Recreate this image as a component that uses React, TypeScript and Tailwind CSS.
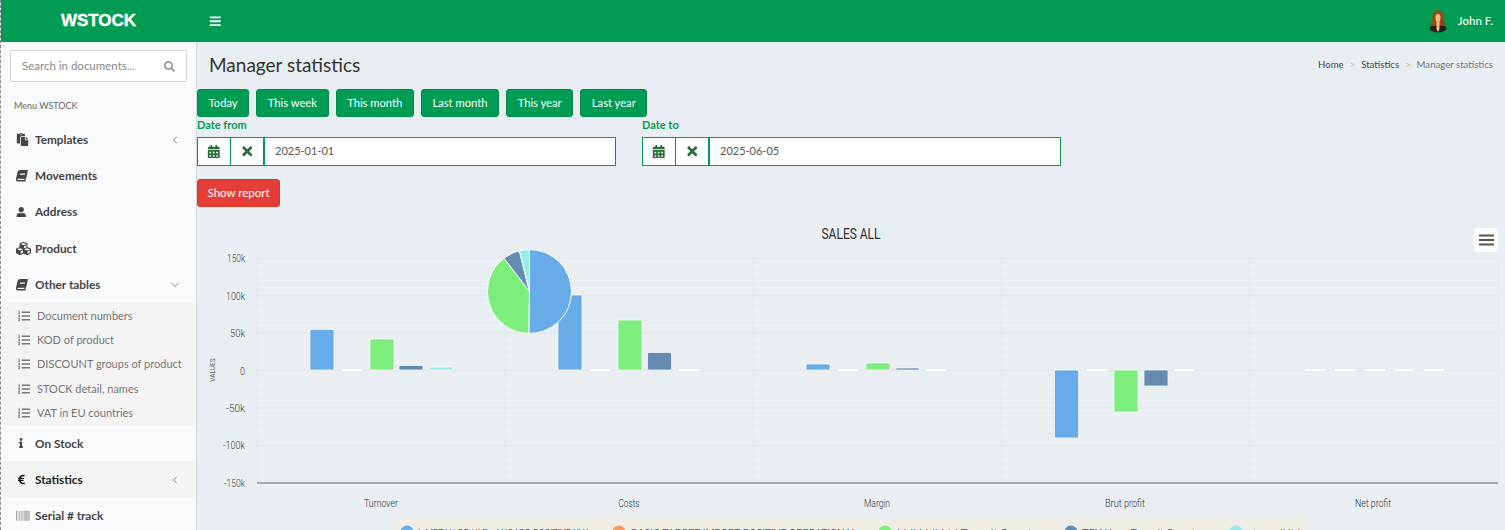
import type { ReactNode } from "react"
import {
  FaBars,
  FaBarcode,
  FaBook,
  FaCalendarAlt,
  FaCubes,
  FaEuroSign,
  FaInfo,
  FaListOl,
  FaPaste,
  FaSearch,
  FaTimes,
  FaUser,
} from "react-icons/fa"
import { ChevronDown, ChevronLeft } from "lucide-react"

const BLUE = "#67acE8"
const ORANGE = "#fb9a5f"
const GREEN = "#7bee7b"
const NAVY = "#678ab3"
const CYAN = "#98ecea"

const rangeButtons = ["Today", "This week", "This month", "Last month", "This year", "Last year"]
const subItems = [
  "Document numbers",
  "KOD of product",
  "DISCOUNT groups of product",
  "STOCK detail, names",
  "VAT in EU countries",
]

// bars are [x, value y, colour]; the zero line is at y 370
const bars: [number, number, string][] = [
  [310, 329.5, BLUE],
  [370, 339, GREEN],
  [399, 365.5, NAVY],
  [429, 367, CYAN],
  [558, 295, BLUE],
  [618, 320, GREEN],
  [647.5, 352.5, NAVY],
  [806, 364, BLUE],
  [866, 363, GREEN],
  [895.5, 368, NAVY],
  [1054.5, 438, BLUE],
  [1114, 412, GREEN],
  [1144, 386, NAVY],
]
const zeroDashes = [342, 590, 679, 838, 926, 1087, 1174, 1305, 1335, 1365, 1394, 1424]
const yLabels: [string, number, number][] = [
  ["150k", 262, 18],
  ["100k", 300, 19],
  ["50k", 337, 15],
  ["0", 375, 5],
  ["-50k", 412, 19],
  ["-100k", 449, 22],
  ["-150k", 487, 21],
]
const xLabels: [string, number, number][] = [
  ["Turnover", 381, 34],
  ["Costs", 629, 21],
  ["Margin", 877, 26],
  ["Brut profit", 1125, 40],
  ["Net profit", 1373, 36],
]
const legend: [string, number, string, number, number][] = [
  ["L-METAN GB HLB - ANGARO POSITIVE UVA", 407, BLUE, 418, 172],
  ["BASIC TARGET IMPORT POSITIVE OPERATIONAL", 619, ORANGE, 631, 226],
  ["Lidl Lidl Ltd Transit Count", 885, GREEN, 897, 135],
  ["TRX Hour Transit Count", 1071, NAVY, 1082, 113],
  ["store all ltd", 1236, CYAN, 1247, 53],
]
const pie: [number, number, string][] = [
  [0, 181, BLUE],
  [181, 322.5, GREEN],
  [322.5, 346, NAVY],
  [346, 360, CYAN],
]

function slicePath(from: number, to: number) {
  const cx = 529.5
  const cy = 291.5
  const r = 42
  const point = (deg: number) => {
    const a = (deg * Math.PI) / 180
    return `${cx + r * Math.sin(a)} ${cy - r * Math.cos(a)}`
  }
  return `M${cx} ${cy}L${point(from)}A${r} ${r} 0 ${to - from > 180 ? 1 : 0} 1 ${point(to)}Z`
}

function MenuItem({ icon, label, arrow, active }: { icon: ReactNode; label: string; arrow?: ReactNode; active?: boolean }) {
  return (
    <div className={`flex h-[36.250px] items-center pr-[15px] pl-[15px] text-[11.800px] font-bold ${active ? "bg-[#f4f4f5] text-[#222]" : "text-[#444]"}`}>
      <span className="flex w-[19px] shrink-0 items-center">{icon}</span>
      <span className="flex-1">{label}</span>
      {arrow}
    </div>
  )
}

function DateField({ label, value }: { label: string; value: string }) {
  return (
    <div className="w-[419px]">
      <div className="text-[11px] leading-[14px] font-bold text-[#009c53]">{label}</div>
      <div className="mt-[5px] flex h-[29px] border border-[#009c53] bg-white text-[#2d6a39]">
        <span className="flex w-[33px] items-center justify-center border-r border-[#009c53] text-[13.500px]">
          <FaCalendarAlt />
        </span>
        <span className="flex w-[34px] items-center justify-center border-r-2 border-[#009c53] text-[14.500px]">
          <FaTimes />
        </span>
        <span className="flex flex-1 items-center pl-[10px] text-[11px] text-[#555]">{value}</span>
      </div>
    </div>
  )
}

function Avatar() {
  return (
    <svg width="20" height="24" viewBox="0 0 20 24" className="shrink-0">
      <ellipse cx="10" cy="19.500" rx="8.500" ry="4" fill="#23211f" />
      <path d="M10 1C5.500 1 4.500 5 4.500 9c0 3-2 5-2.500 6.500 2 2 5 1.500 8 1 3 .5 6 1 8-1-.5-1.500-2.500-3.500-2.500-6.500 0-4-1-8-5.500-8z" fill="#8a4f1c" />
      <path d="M7.500 8c0-2 1-3 2.500-3s2.500 1 2.500 3-.5 4-1 5v7l-1.500 3-1.500-3v-7c-.5-1-1-3-1-5z" fill="#f6b77c" />
    </svg>
  )
}

function Chart() {
  return (
    <svg viewBox="197 220 1308 310" width="1308" height="310" className="block shrink-0 font-['Roboto',sans-serif]">
      <text x="851" y="239" textAnchor="middle" fontSize="14" fill="#333" textLength="59" lengthAdjust="spacingAndGlyphs">
        SALES ALL
      </text>
      <rect x="1474" y="228" width="24" height="24" rx="2" fill="#fff" />
      <path d="M1479 235.500h15M1479 240h15M1479 244.500h15" stroke="#555" strokeWidth="2" />

      {Array.from({ length: 30 }, (_, i) => (
        <path key={i} d={`M257 ${258 + i * 7.5}H1498`} stroke={i % 5 === 0 ? "#e3e7ea" : "#eff2f5"} strokeWidth="1" />
      ))}
      {[257, 505, 753.500, 1001.500, 1249.500, 1498].map((x) => (
        <path key={x} d={`M${x} 258V483`} stroke="#e4e7eb" strokeWidth="1" />
      ))}
      <path d="M257 483H1498" stroke="#8b9095" strokeWidth="1.500" />

      {yLabels.map(([t, y, w]) => (
        <text key={t} x="245" y={y} textAnchor="end" fontSize="11" fontWeight="300" fill="#444" textLength={w} lengthAdjust="spacingAndGlyphs">
          {t}
        </text>
      ))}
      <text transform="translate(214.500 370) rotate(-90)" textAnchor="middle" fontSize="6.500" fill="#666">
        VALUES
      </text>
      {xLabels.map(([t, x, w]) => (
        <text key={t} x={x} y="507" textAnchor="middle" fontSize="11" fontWeight="300" fill="#333" textLength={w} lengthAdjust="spacingAndGlyphs">
          {t}
        </text>
      ))}

      {bars.map(([x, y, color]) => (
        <rect key={x} x={x} y={Math.min(y, 370)} width="24" height={Math.abs(370 - y)} rx="1.500" fill={color} stroke="#fff" strokeOpacity="0.7" />
      ))}
      {zeroDashes.map((x) => (
        <rect key={x} x={x} y="369" width="20" height="2" fill="#fff" />
      ))}

      {pie.map(([from, to, color]) => (
        <path key={from} d={slicePath(from, to)} fill={color} stroke="#fff" strokeWidth="1" />
      ))}

      <rect x="393" y="518" width="917" height="20" rx="2" fill="#eeeee6" />
      {legend.map(([t, cx, color, x, w]) => (
        <g key={t}>
          <circle cx={cx} cy="532" r="6.500" fill={color} />
          <text x={x} y="537" fontSize="11" fill="#555" textLength={w} lengthAdjust="spacingAndGlyphs">
            {t}
          </text>
        </g>
      ))}
    </svg>
  )
}

const left = <ChevronLeft size={12} strokeWidth={1.5} className="text-[#555]" />
const down = <ChevronDown size={12} strokeWidth={1.5} className="text-[#555]" />

export default function App() {
  return (
    <div className="flex h-[530px] flex-col overflow-hidden border-l border-dashed border-[#8d8d8d] bg-[#e9eef2] font-['Lato',sans-serif]">
      <header className="flex h-[42px] shrink-0 items-center bg-[#009c53] text-white">
        <div className="flex w-[196px] justify-center pr-[1px] font-['Liberation_Sans',sans-serif] text-[17px] font-bold [-webkit-text-stroke:0.4px_white]">WSTOCK</div>
        <FaBars className="ml-[12px] text-[12.500px]" />
        <div className="ml-auto flex items-center gap-[10px] pr-[12px] text-[11.500px] font-medium">
          <Avatar />
          <span>John F.</span>
        </div>
      </header>

      <div className="flex min-h-0 flex-1">
        <aside className="w-[196px] shrink-0 border-r border-[#d2d6de] bg-[#f9fafc]">
          <div className="px-[9px] pt-2">
            <div className="flex h-[32px] items-center justify-between rounded-[2px] border border-[#d2d6de] bg-white pr-[11px] pl-[11px] text-[11.500px] text-[#888]">
              <span>Search in documents...</span>
              <FaSearch className="text-[11px] text-[#999]" />
            </div>
          </div>
          <div className="mt-[18px] mb-[9.500px] pl-[13px] text-[9px] leading-[12px] text-[#666]">Menu WSTOCK</div>
          <MenuItem icon={<FaPaste className="text-[13px]" />} label="Templates" arrow={left} />
          <MenuItem icon={<FaBook className="-skew-x-12 text-[11.500px]" />} label="Movements" />
          <MenuItem icon={<FaUser className="text-[10.500px]" />} label="Address" />
          <MenuItem icon={<FaCubes className="text-[15px]" />} label="Product" />
          <MenuItem icon={<FaBook className="-skew-x-12 text-[11.500px]" />} label="Other tables" arrow={down} />
          <div className="bg-[#f4f4f5] pt-[1px]">
            {subItems.map((item) => (
              <div key={item} className="flex h-[24.300px] items-center pl-[17px] text-[11px] text-[#777]">
                <FaListOl className="mr-[7px] shrink-0 text-[12px]" />
                {item}
              </div>
            ))}
          </div>
          <MenuItem icon={<FaInfo className="text-[10px]" />} label="On Stock" />
          <MenuItem icon={<FaEuroSign className="text-[11px] text-[#111]" />} label="Statistics" arrow={left} active />
          <MenuItem icon={<FaBarcode className="text-[13.500px] text-[#888]" />} label="Serial # track" />
        </aside>

        <main className="min-w-0 flex-1">
          <div className="flex h-[47px] items-center justify-between pr-[12px] pl-[12px]">
            <h1 className="text-[19px] text-[#333]">Manager statistics</h1>
            <div className="flex gap-[6px] text-[9.600px] text-[#444]">
              <span>Home</span>
              <span className="text-[#bbb]">&gt;</span>
              <span>Statistics</span>
              <span className="text-[#bbb]">&gt;</span>
              <span className="text-[#777]">Manager statistics</span>
            </div>
          </div>
          <div className="flex gap-[7px]">
            {rangeButtons.map((b) => (
              <button key={b} className="h-7 rounded-[3px] border border-[#008d4c] bg-[#009c53] px-[10.600px] text-[11.200px] text-white">
                {b}
              </button>
            ))}
          </div>
          <div className="mt-[1px] flex gap-[26px]">
            <DateField label="Date from" value="2025-01-01" />
            <DateField label="Date to" value="2025-06-05" />
          </div>
          <button className="mt-[13px] h-7 w-[83px] rounded-[3px] border border-[#d73925] bg-[#e53e38] text-[11.500px] text-white">
            Show report
          </button>
          <div className="mt-[13px]">
            <Chart />
          </div>
        </main>
      </div>
    </div>
  )
}
